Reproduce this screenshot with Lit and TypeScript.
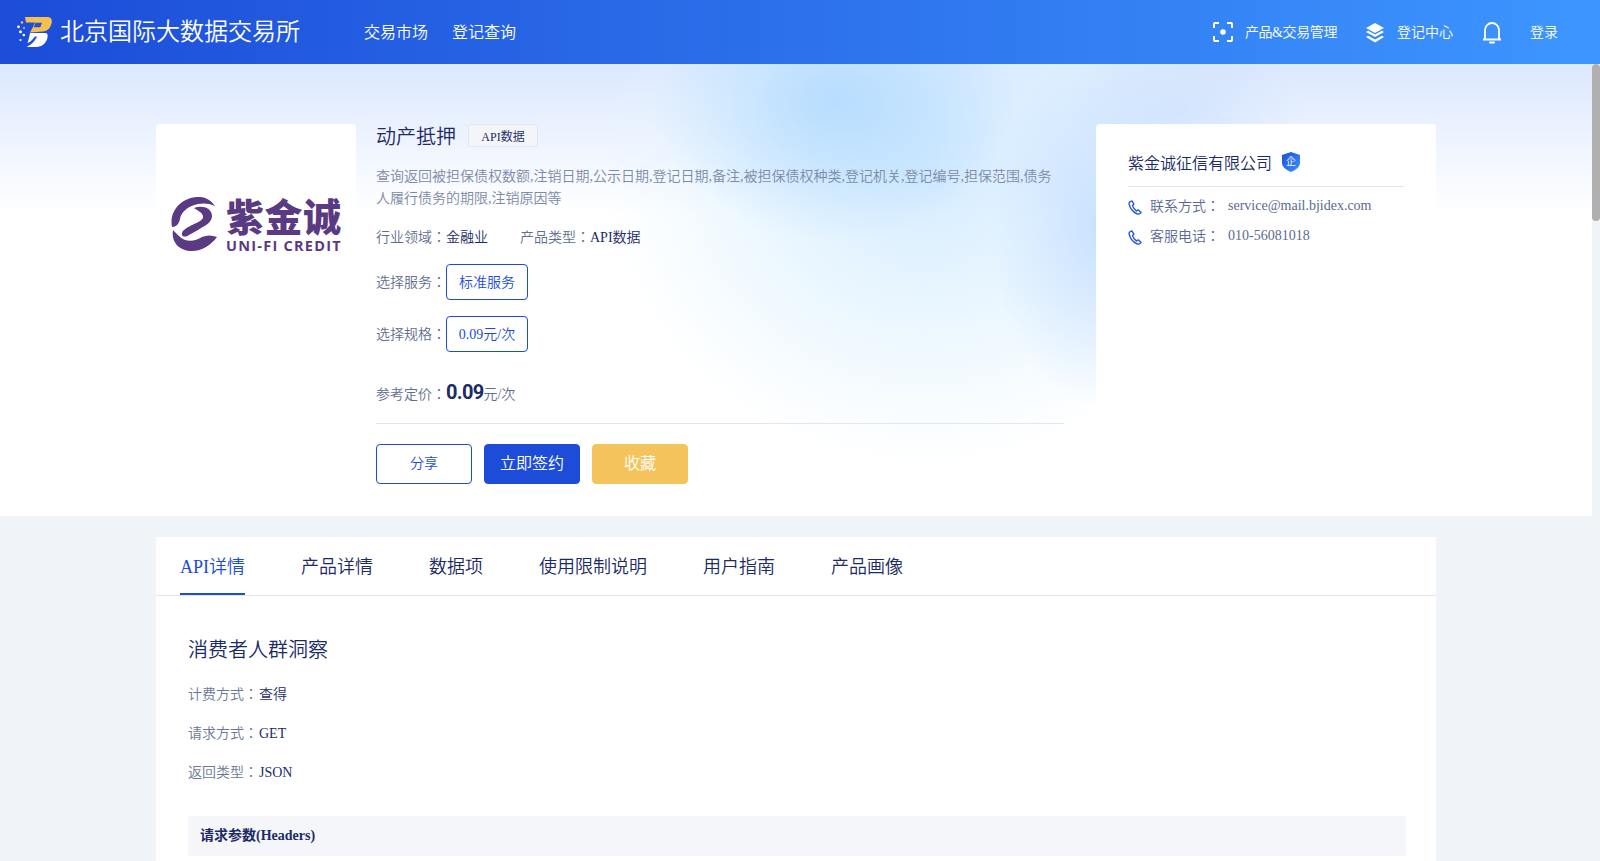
import { LitElement, html, css, svg } from "lit";
import { customElement } from "lit/decorators.js";

const phone = svg`<svg class="phone" viewBox="0 0 14 15" width="14" height="15"><path d="M2.2 1.6 4.1 1 5.9 4.3 4.5 5.6C5.1 7.8 6.6 9.9 8.6 11L10.2 9.9 13 12.3 12.2 13.3C11.5 14.1 10.2 14.3 8.9 13.7 4.9 11.9 1.9 7.9 1.1 3.8 1 2.9 1.4 2.1 2.2 1.6Z" fill="none" stroke="#2f5fdc" stroke-width="1.5" stroke-linejoin="round"/></svg>`;

const tabs = ["API详情", "产品详情", "数据项", "使用限制说明", "用户指南", "产品画像"];

@customElement("app-root")
export class AppRoot extends LitElement {
  static styles = css`
    :host {
      display: flex;
      flex-direction: column;
      height: 100vh;
      overflow: hidden;
      background: #f0f3f8;
      color: #1c2b64;
      font-family: "Liberation Serif", "Noto Sans CJK JP", serif;
      font-size: 14px;
      font-weight: 350;
    }
    .top {
      flex: none;
      height: 64px;
      display: flex;
      align-items: center;
      padding-left: 16px;
      color: #fff;
      background: linear-gradient(90deg, #1c4cd8 0%, #3d96ff 100%);
    }
    .brand-logo { flex: none; display: block; width: 36px; height: 32px; }
    .brand { font-size: 24px; margin-left: 8px; line-height: 32px; width: 304px; white-space: nowrap; }
    .nav { display: flex; gap: 24px; font-size: 16px; padding-bottom: 2px; }
    .top-right { margin-left: auto; display: flex; align-items: center; padding-right: 42px; }
    .ti { display: flex; align-items: center; white-space: nowrap; }
    .ti svg { display: block; flex: none; }
    .lbl { padding-bottom: 2px; }
    .t1 { gap: 12px; margin-right: 29px; }
    .t1 .lbl { letter-spacing: -0.4px; }
    .t2 { gap: 13px; margin-right: 29px; }
    .t2 svg { margin-top: 2px; }
    .bell { margin-right: 28px; }

    .main { flex: 1; min-height: 0; display: flex; }
    .scroll { flex: 1; min-width: 0; overflow: hidden; background: #f0f3f8; }
    .rail { flex: none; width: 8px; background: #f0f3f8; }
    .thumb { height: 157px; background: #b0b0b0; border-radius: 4px; }

    .hero {
      height: 452px;
      box-sizing: border-box;
      padding-top: 60px;
      background:
        radial-gradient(ellipse 180px 140px at 835px 38px, rgba(170, 215, 255, 0.75), rgba(170, 215, 255, 0)),
        radial-gradient(ellipse 120px 85px at 1185px 45px, rgba(200, 222, 252, 0.6), rgba(200, 222, 252, 0)),
        radial-gradient(ellipse 115px 180px at 1105px 165px, rgba(190, 218, 255, 0.8), rgba(190, 218, 255, 0)),
        radial-gradient(ellipse 320px 300px at 925px 100px, rgba(205, 232, 255, 0.85), rgba(225, 243, 255, 0.55) 60%, rgba(235, 246, 255, 0)),
        linear-gradient(180deg, #dce8fe 0, #ffffff 150px);
    }
    .wrap { width: 1280px; margin: 0 auto; display: flex; align-items: flex-start; }
    .logo-card {
      flex: none;
      width: 200px;
      height: 200px;
      box-sizing: border-box;
      background: #fff;
      border-radius: 4px;
      margin-right: 20px;
      display: flex;
      align-items: center;
      padding-left: 15px;
      gap: 9px;
      color: #5a3a82;
    }
    .emblem { display: block; flex: none; }
    .logo-text { display: flex; flex-direction: column; align-items: flex-start; }
    .logo-cn { font-family: "Noto Sans CJK SC", sans-serif; font-weight: 900; font-size: 38px; line-height: 38px; margin-bottom: 4px; letter-spacing: 0.5px; white-space: nowrap; }
    .logo-en { font-family: "Open Sans", sans-serif; font-weight: 700; font-size: 14.5px; line-height: 15px; letter-spacing: 1.25px; white-space: nowrap; }

    .info { flex: none; width: 688px; margin-right: 32px; }
    .title-row { display: flex; align-items: center; height: 23px; gap: 12px; }
    .title { font-size: 20px; line-height: 23px; padding-top: 4px; }
    .tag {
      box-sizing: border-box;
      width: 70px;
      height: 23px;
      text-align: center;
      font-size: 12px;
      line-height: 24px;
      background: #f3f5f9;
      border: 1px solid #e5e7ee;
      border-radius: 2px;
    }
    .desc { margin: 19px 0 0; line-height: 22px; color: #7d8aa8; width: 678px; }
    .muted { color: #5f6d8f; }
    .meta { display: flex; gap: 32px; margin-top: 17px; line-height: 22px; }
    .sel { display: flex; align-items: center; margin-top: 16px; }
    .sel .muted { padding-bottom: 2px; }
    .meta + .sel { margin-top: 15px; }
    .opt {
      box-sizing: border-box;
      width: 82px;
      height: 36px;
      line-height: 36px;
      text-align: center;
      color: #1c4cd8;
      border: 1px solid #1c4cd8;
      border-radius: 4px;
    }
    .price { display: flex; align-items: baseline; height: 28px; line-height: 28px; margin-top: 26px; }
    .num { font-family: "Roboto", sans-serif; font-weight: 700; font-size: 20px; letter-spacing: -0.7px; }
    .div { height: 1px; background: #e4e6ec; margin-top: 17px; }
    .btns { display: flex; gap: 12px; margin-top: 20px; }
    .btn {
      box-sizing: border-box;
      width: 96px;
      height: 40px;
      line-height: 38px;
      text-align: center;
      border-radius: 4px;
      border: 1px solid #1c4cd8;
      font-size: 16px;
      color: #fff;
    }
    .b1 { font-size: 14px; color: #1c4cd8; background: #fff; }
    .b2 { background: #1c4cd8; }
    .b3 { background: #f5c35b; border-color: #f5c35b; }

    .corp {
      flex: none;
      width: 340px;
      height: 330px;
      box-sizing: border-box;
      background: #fff;
      border-radius: 4px;
      padding: 0 32px;
    }
    .corp-head { display: flex; align-items: center; gap: 10px; height: 63px; border-bottom: 1px solid #e4e6ec; font-size: 16px; padding-top: 13px; margin-bottom: 4px; box-sizing: border-box; }
    .shield { position: relative; flex: none; width: 18px; height: 20px; display: flex; margin-top: 1px; }
    .shield span { position: absolute; inset: 0; text-align: center; color: #fff; font-size: 10px; line-height: 20px; }
    .contact { display: flex; align-items: center; height: 30px; color: #5b6a92; }
    .contact svg { flex: none; margin-right: 8px; display: block; margin-top: 3px; }
    .contact .k { width: 78px; white-space: nowrap; padding-bottom: 3px; }

    .panel { width: 1280px; min-height: 3573px; margin: 21px auto 0; background: #fff; box-sizing: border-box; }
    .tabs { display: flex; gap: 56px; height: 59px; box-sizing: border-box; padding: 0 24px; border-bottom: 1px solid #e4e6ec; }
    .tab { font-size: 18px; height: 58px; line-height: 60px; box-sizing: border-box; white-space: nowrap; }
    .tab.on { color: #1c4cd8; border-bottom: 2px solid #1c4cd8; }
    .body { padding: 40px 30px 0 32px; }
    .h { font-size: 20px; line-height: 28px; margin: 0 0 20px; font-weight: 350; }
    .row { line-height: 22px; margin-bottom: 17px; display: flex; }
    .row .k { width: 71px; color: #6b7896; white-space: nowrap; }
    .bar { margin-top: 32px; height: 40px; line-height: 40px; background: #f4f6fa; padding-left: 12px; font-weight: 700; }
  `;

  render() {
    return html`
      <div class="top">
        <svg class="brand-logo" viewBox="16 16 36 32">
          <path d="M25 17H47.500C51.500 17 52.500 20 51.500 23.500C50.500 28 47.500 31 43 31.500L30 32.500L33 27L35 22.500H26Z" fill="#f5c04e"/>
          <path d="M35.500 22.700H42L40.300 27.300H33.800Z" fill="#2050da"/>
          <path d="M30 33H45C47.500 33 48 35 47.500 37.500C46.500 43 42 47 36 47H26.500C31 45 34 42 36 38.500L37 36.500H35L32 40C30.500 41.500 29 42.500 27.500 43L29 38Z" fill="#fff"/>
          <circle cx="22" cy="22.500" r="1.200" fill="#f5c04e"/>
          <circle cx="18.500" cy="26.800" r="1.400" fill="#fff"/>
          <circle cx="24" cy="28" r="1" fill="#f5c04e"/>
          <circle cx="20.500" cy="31.800" r="1.500" fill="#fff"/>
          <circle cx="23.800" cy="35" r="1.300" fill="#fff"/>
          <circle cx="20.500" cy="40" r="1" fill="#fff"/>
        </svg>
        <div class="brand">北京国际大数据交易所</div>
        <div class="nav"><span>交易市场</span><span>登记查询</span></div>
        <div class="top-right">
          <div class="ti t1">
            <svg width="20" height="20" viewBox="0 0 20 20" fill="none" stroke="#fff" stroke-width="2"><path d="M1 6V2A1 1 0 0 1 2 1H6M14 1H18A1 1 0 0 1 19 2V6M19 14V18A1 1 0 0 1 18 19H14M6 19H2A1 1 0 0 1 1 18V14"/><circle cx="10" cy="10" r="2.800" fill="#fff" stroke="none"/></svg>
            <span class="lbl">产品&交易管理</span>
          </div>
          <div class="ti t2">
            <svg width="18" height="20" viewBox="0 0 18 20" fill="#fff"><path d="M9 0 18 5 9 10 0 5Z"/><path d="M0 9 2.200 7.800 9 11.600 15.800 7.800 18 9 9 14Z"/><path d="M0 14 2.200 12.800 9 16.600 15.800 12.800 18 14 9 19.500Z"/></svg>
            <span class="lbl">登记中心</span>
          </div>
          <svg class="bell" width="20" height="23" viewBox="0 0 20 23" fill="none" stroke="#fff" stroke-width="1.800"><path d="M1 18.500H19M3 18.500V9A7 7 0 0 1 17 9V18.500"/><path d="M8 21.500H12" stroke-width="2" stroke-linecap="round"/></svg>
          <span class="lbl">登录</span>
        </div>
      </div>

      <div class="main">
        <div class="scroll">
          <div class="hero">
            <div class="wrap">
              <div class="logo-card">
                <svg class="emblem" width="46" height="54" viewBox="0 0 46 54" fill="#5a3a82">
                  <path d="M1 30C-2 14 10 1 26 0C34 -0.500 40 3 44 9C38 6 32 6 27 7C17 9 10 15 9 22C8 27 5 30 1 30Z"/>
                  <path d="M23 11C31 8 41 11 41 19C41 26 33 29 27 33L18 38C15 40 12 40 11 38C10 34 15 31 21 28C27 25 33 23 32 19C31 15 27 14 23 11Z"/>
                  <path d="M2 33C6 37 9 41 14 43C20 45 26 43 31 40C36 38 41 38 46 40C40 48 31 54 21 54C9 54 0 46 2 33Z"/>
                </svg>
                <div class="logo-text">
                  <span class="logo-cn">紫金诚</span>
                  <span class="logo-en">UNI-FI CREDIT</span>
                </div>
              </div>

              <div class="info">
                <div class="title-row"><span class="title">动产抵押</span><span class="tag">API数据</span></div>
                <p class="desc">查询返回被担保债权数额,注销日期,公示日期,登记日期,备注,被担保债权种类,登记机关,登记编号,担保范围,债务人履行债务的期限,注销原因等</p>
                <div class="meta">
                  <span><span class="muted">行业领域：</span>金融业</span>
                  <span><span class="muted">产品类型：</span>API数据</span>
                </div>
                <div class="sel"><span class="muted">选择服务：</span><span class="opt">标准服务</span></div>
                <div class="sel"><span class="muted">选择规格：</span><span class="opt">0.09元/次</span></div>
                <div class="price"><span class="muted">参考定价：</span><span class="num">0.09</span><span class="muted">元/次</span></div>
                <div class="div"></div>
                <div class="btns">
                  <div class="btn b1">分享</div>
                  <div class="btn b2">立即签约</div>
                  <div class="btn b3">收藏</div>
                </div>
              </div>

              <div class="corp">
                <div class="corp-head">
                  <span>紫金诚征信有限公司</span>
                  <span class="shield">
                    <svg width="18" height="20" viewBox="0 0 18 20"><defs><linearGradient id="sg" x1="0" y1="0" x2="1" y2="1"><stop offset="0" stop-color="#1c4cd8"/><stop offset="1" stop-color="#3d96ff"/></linearGradient></defs><path d="M9 0 18 3V11C18 15 13 18.500 9 20 5 18.500 0 15 0 11V3Z" fill="url(#sg)"/></svg>
                    <span>企</span>
                  </span>
                </div>
                <div class="contact">${phone}<span class="k">联系方式：</span><span>service@mail.bjidex.com</span></div>
                <div class="contact">${phone}<span class="k">客服电话：</span><span>010-56081018</span></div>
              </div>
            </div>
          </div>

          <div class="panel">
            <div class="tabs">
              ${tabs.map((t, i) => html`<div class="tab ${i === 0 ? "on" : ""}">${t}</div>`)}
            </div>
            <div class="body">
              <h2 class="h">消费者人群洞察</h2>
              <div class="row"><span class="k">计费方式：</span><span>查得</span></div>
              <div class="row"><span class="k">请求方式：</span><span>GET</span></div>
              <div class="row"><span class="k">返回类型：</span><span>JSON</span></div>
              <div class="bar">请求参数(Headers)</div>
            </div>
          </div>
        </div>
        <div class="rail"><div class="thumb"></div></div>
      </div>
    `;
  }
}
